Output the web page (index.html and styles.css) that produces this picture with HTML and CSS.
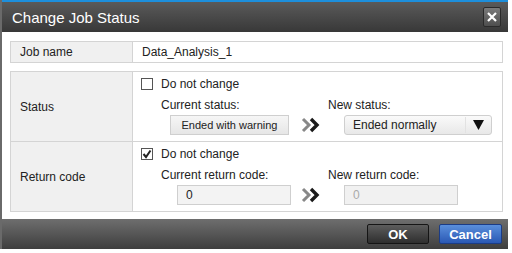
FILE: index.html
```html
<!DOCTYPE html>
<html lang="en">
<head>
    <meta charset="UTF-8">
    <title>Change Job Status</title>
    <link rel="stylesheet" href="styles.css">
</head>
<body>

<div class="dialog">
    <div class="titlebar">
        <span class="title">Change Job Status</span>
        <button class="close" title="Close">
            <svg width="10" height="10" viewBox="0 0 10 10"><path d="M1 1 L9 9 M9 1 L1 9" stroke="#fff" stroke-width="2.2"/></svg>
        </button>
    </div>

    <div class="content">
        <div class="grid job">
            <div class="label">Job name</div>
            <div class="value">Data_Analysis_1</div>
        </div>

        <div class="grid">
            <div class="label tall">Status</div>
            <div class="value tall">
                <label class="check"><span class="box"></span>Do not change</label>
                <div class="change">
                    <div class="current">
                        <div class="caption">Current status:</div>
                        <div class="btn-static">Ended with warning</div>
                    </div>
                    <svg class="arrows" width="20" height="16" viewBox="0 0 20 16"><polyline points="2,2 8,8 2,14" fill="none" stroke="#888" stroke-width="3"/><polyline points="10,2 16,8 10,14" fill="none" stroke="#1a1a1a" stroke-width="3.4"/></svg>
                    <div class="new">
                        <div class="caption">New status:</div>
                        <div class="select"><span>Ended normally</span><span class="caret"><svg width="11" height="10" viewBox="0 0 11 10"><polygon points="0,0 11,0 5.5,10" fill="#111"/></svg></span></div>
                    </div>
                </div>
            </div>

            <div class="label tall">Return code</div>
            <div class="value tall">
                <label class="check"><span class="box"><svg width="10" height="10" viewBox="0 0 10 10"><polyline points="1.5,5 4,8 8.5,1.5" fill="none" stroke="#222" stroke-width="2"/></svg></span>Do not change</label>
                <div class="change">
                    <div class="current">
                        <div class="caption">Current return code:</div>
                        <div class="field code">0</div>
                    </div>
                    <svg class="arrows" width="20" height="16" viewBox="0 0 20 16"><polyline points="2,2 8,8 2,14" fill="none" stroke="#888" stroke-width="3"/><polyline points="10,2 16,8 10,14" fill="none" stroke="#1a1a1a" stroke-width="3.4"/></svg>
                    <div class="new">
                        <div class="caption">New return code:</div>
                        <div class="field disabled">0</div>
                    </div>
                </div>
            </div>
        </div>
    </div>

    <div class="footer">
        <button class="btn ok">OK</button>
        <button class="btn cancel">Cancel</button>
    </div>
</div>

</body>
</html>
```

FILE: styles.css
```css
* {
    box-sizing: border-box;
}
body {
    margin: 0;
    background-color: #ffffff;
    font-family: "Liberation Sans", Arial, sans-serif;
    font-size: 12px;
    color: #222;
}
.dialog {
    width: 508px;
    border-left: 2px solid #6a6a6a;
    background-color: #ffffff;
}
.titlebar {
    height: 32px;
    border-top: 2px solid #1d8fdc;
    background: linear-gradient(#5a5a5a, #383838);
    display: flex;
    align-items: center;
    justify-content: space-between;
    padding: 0 7px 0 10px;
}
.title {
    color: #ffffff;
    font-size: 15px;
}
.close {
    width: 18px;
    height: 20px;
    padding: 0;
    border: 1px solid #2a2a2a;
    border-radius: 2px;
    background: linear-gradient(#7a7a7a, #4e4e4e);
    display: flex;
    align-items: center;
    justify-content: center;
}
.content {
    padding: 9px 0 7px 8px;
}
.grid {
    width: 493px;
    display: grid;
    grid-template-columns: 122px 1fr;
    border-top: 1px solid #d4d4d4;
    border-left: 1px solid #d4d4d4;
}
.grid > div {
    border-right: 1px solid #d4d4d4;
    border-bottom: 1px solid #d4d4d4;
}
.job {
    margin-bottom: 8px;
}
.job > div {
    height: 21px;
    display: flex;
    align-items: center;
}
.label {
    padding-left: 9px;
    background-color: #f0f0f0;
}
.grid .label.tall {
    display: flex;
    align-items: center;
}
.job .value {
    padding-left: 9px;
}
.tall {
    height: 70px;
}
.value.tall {
    padding: 6px 0 0 8px;
}
.check {
    display: flex;
    align-items: center;
    gap: 8px;
    height: 12px;
}
.box {
    width: 12px;
    height: 12px;
    border: 1px solid #555;
    background-color: #fff;
    display: flex;
    align-items: center;
    justify-content: center;
}
.change {
    display: flex;
    align-items: flex-end;
    margin-top: 8px;
}
.current {
    width: 160px;
    padding-left: 20px;
}
.caption {
    height: 17px;
}
.btn-static {
    margin-left: 9px;
    width: 119px;
    height: 20px;
    line-height: 18px;
    text-align: center;
    font-size: 11px;
    border: 1px solid #cfcfcf;
    background: linear-gradient(#f6f6f6, #e6e6e6);
}
.arrows {
    margin: 0 7px 2px 0;
}
.new {
    flex: 1;
}
.select {
    margin-left: 16px;
    width: 148px;
    height: 20px;
    padding: 0 0 0 8px;
    border: 1px solid #cfcfcf;
    border-radius: 3px;
    background: linear-gradient(#fafafa, #e8e8e8);
    display: flex;
    align-items: center;
    justify-content: space-between;
}
.caret {
    width: 26px;
    height: 16px;
    border-left: 1px solid #e2e2e2;
    display: flex;
    align-items: center;
    justify-content: center;
}
.field {
    height: 20px;
    line-height: 18px;
    border: 1px solid #cfcfcf;
    background-color: #f3f3f3;
    padding-left: 8px;
    width: 114px;
}
.code {
    margin-left: 16px;
}
.disabled {
    margin-left: 16px;
    color: #aaa;
    background-color: #f1f1f1;
}
.footer {
    height: 30px;
    background: linear-gradient(#6e6e6e, #3e3e3e);
    display: flex;
    align-items: center;
    justify-content: flex-end;
    gap: 10px;
    padding-right: 6px;
}
.btn {
    height: 20px;
    border-radius: 2px;
    color: #fff;
    font-family: "Liberation Sans", Arial, sans-serif;
    font-size: 13px;
    font-weight: bold;
    padding: 0;
}
.ok {
    width: 62px;
    border: 1px solid #151515;
    background: linear-gradient(#5c5c5c, #2e2e2e);
}
.cancel {
    width: 63px;
    border: 1px solid #1b3c86;
    background: linear-gradient(#5a8fdc, #2a58b4);
}
```
